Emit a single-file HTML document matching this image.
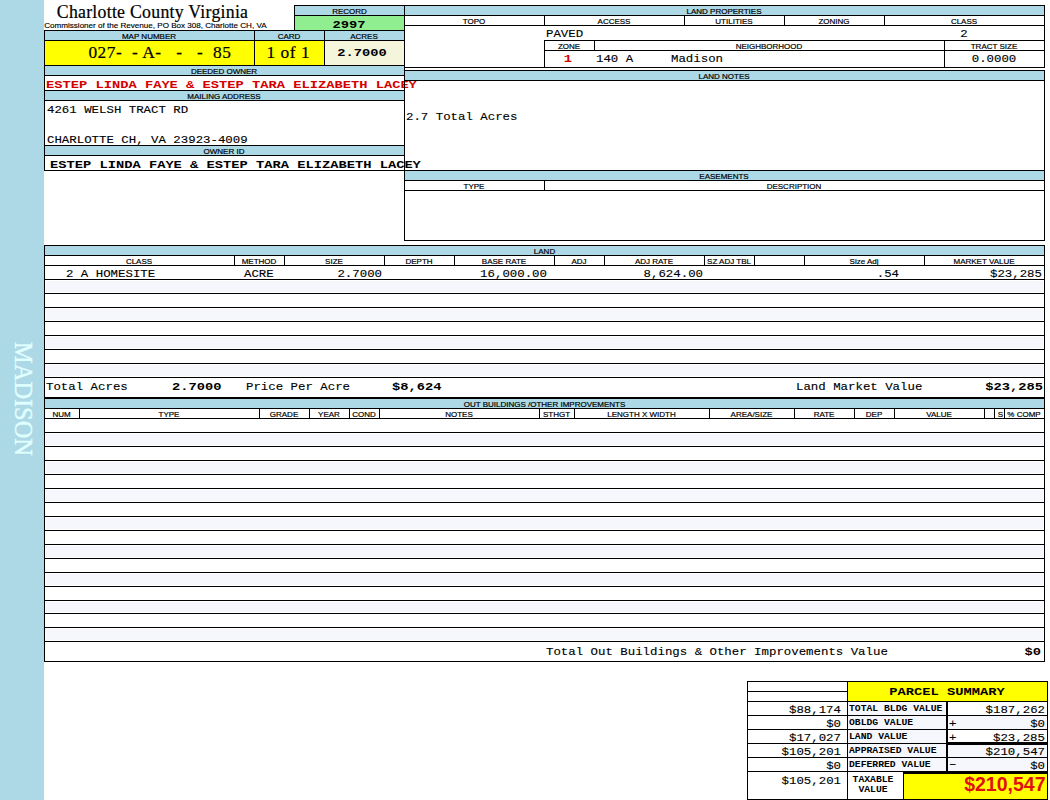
<!DOCTYPE html>
<html lang="en"><head><meta charset="utf-8"><title>Charlotte County Virginia - Property Card</title>
<style>
html,body{margin:0;padding:0;background:#fff}
body{width:1050px;height:800px;position:relative;overflow:hidden}
.f,.l,.t{position:absolute}
.l{background:#000;z-index:6}
.t{white-space:pre;color:#000;overflow:visible;z-index:5}
.hd{font-family:"Liberation Sans",Arial,sans-serif;font-size:8px;-webkit-text-stroke:0.2px #000}
.sub{font-family:"Liberation Sans",Arial,sans-serif;font-size:8.1px;-webkit-text-stroke:0.15px #000}
.ser{font-family:"Liberation Serif","Times New Roman",serif;font-size:17.33px;letter-spacing:0.53px;-webkit-text-stroke:0.2px #000}
.ttl{font-family:"Liberation Serif","Times New Roman",serif;font-size:17.8px;letter-spacing:0.26px;-webkit-text-stroke:0.2px #000}
.m{font-family:"Liberation Mono","Courier New",monospace;font-size:11px;-webkit-text-stroke:0.12px #000}
.mb{font-family:"Liberation Mono","Courier New",monospace;font-size:11px;font-weight:bold}
.ms{font-family:"Liberation Mono","Courier New",monospace;font-size:8.5px;font-weight:bold}
.big{font-family:"Liberation Sans",Arial,sans-serif;font-size:19.5px;font-weight:bold}
.side{font-family:"Liberation Serif","Times New Roman",serif;font-size:24.4px;color:#e0ffff;-webkit-text-stroke:0.35px #e0ffff}
</style></head>
<body>
<div class="f" style="left:0px;top:0px;width:44px;height:800px;background:#add8e6"></div>
<div class="t side" style="left:-76.9px;top:384.2px;width:200px;height:30px;line-height:30px;text-align:center;transform:rotate(90deg)">MADISON</div>
<div class="t ttl" style="left:-97.50px;top:0.79px;width:500px;height:23px;line-height:23px;text-align:center;">Charlotte County Virginia</div>
<div class="t sub" style="left:44.20px;top:20.19px;width:500px;height:11px;line-height:11px;text-align:left;letter-spacing:-0.01px;">Commissioner of the Revenue, PO Box 308, Charlotte CH, VA</div>
<div class="f" style="left:295px;top:6px;width:109px;height:9px;background:#add8e6"></div>
<div class="f" style="left:295px;top:16px;width:109px;height:14px;background:#90ee90"></div>
<div class="l" style="left:294px;top:5px;width:111px;height:1px"></div>
<div class="l" style="left:294px;top:15px;width:111px;height:1px"></div>
<div class="l" style="left:294px;top:5px;width:1px;height:26px"></div>
<div class="t hd" style="left:99.50px;top:6.63px;width:500px;height:10px;line-height:10px;text-align:center;">RECORD</div>
<div class="t mb" style="left:98.50px;top:17.57px;width:500px;height:14px;line-height:14px;text-align:center;transform:scaleX(1.2485);transform-origin:50% 50%;">2997</div>
<div class="f" style="left:45px;top:31px;width:359px;height:9px;background:#add8e6"></div>
<div class="f" style="left:45px;top:41px;width:209px;height:24px;background:#ffff00"></div>
<div class="f" style="left:255px;top:41px;width:69px;height:24px;background:#ffff00"></div>
<div class="f" style="left:325px;top:41px;width:79px;height:24px;background:#f5f5dc"></div>
<div class="f" style="left:45px;top:66px;width:359px;height:9px;background:#add8e6"></div>
<div class="f" style="left:45px;top:91px;width:359px;height:9px;background:#add8e6"></div>
<div class="f" style="left:45px;top:146px;width:359px;height:9px;background:#add8e6"></div>
<div class="l" style="left:44px;top:30px;width:361px;height:1px"></div>
<div class="l" style="left:44px;top:40px;width:361px;height:1px"></div>
<div class="l" style="left:44px;top:65px;width:361px;height:1px"></div>
<div class="l" style="left:44px;top:75px;width:361px;height:1px"></div>
<div class="l" style="left:44px;top:90px;width:361px;height:1px"></div>
<div class="l" style="left:44px;top:100px;width:361px;height:1px"></div>
<div class="l" style="left:44px;top:145px;width:361px;height:1px"></div>
<div class="l" style="left:44px;top:155px;width:361px;height:1px"></div>
<div class="l" style="left:44px;top:170px;width:361px;height:1px"></div>
<div class="l" style="left:44px;top:30px;width:1px;height:141px"></div>
<div class="l" style="left:254px;top:30px;width:1px;height:36px"></div>
<div class="l" style="left:324px;top:30px;width:1px;height:36px"></div>
<div class="t hd" style="left:-101.00px;top:31.63px;width:500px;height:10px;line-height:10px;text-align:center;">MAP NUMBER</div>
<div class="t hd" style="left:39.00px;top:31.63px;width:500px;height:10px;line-height:10px;text-align:center;">CARD</div>
<div class="t hd" style="left:114.00px;top:31.63px;width:500px;height:10px;line-height:10px;text-align:center;">ACRES</div>
<div class="t ser" style="left:88.40px;top:40.75px;width:500px;height:23px;line-height:23px;text-align:left;">027-  - A-   -   -  85</div>
<div class="t ser" style="left:38.30px;top:40.75px;width:500px;height:23px;line-height:23px;text-align:center;">1 of 1</div>
<div class="t mb" style="left:112.00px;top:45.67px;width:500px;height:14px;line-height:14px;text-align:center;transform:scaleX(1.2485);transform-origin:50% 50%;">2.7000</div>
<div class="t hd" style="left:-26.00px;top:66.63px;width:500px;height:10px;line-height:10px;text-align:center;">DEEDED OWNER</div>
<div class="t mb" style="left:45.50px;top:77.57px;width:500px;height:14px;line-height:14px;text-align:left;transform:scaleX(1.2485);transform-origin:0 50%;color:#d40000;">ESTEP LINDA FAYE &amp; ESTEP TARA ELIZABETH LACEY</div>
<div class="t hd" style="left:-26.00px;top:91.63px;width:500px;height:10px;line-height:10px;text-align:center;">MAILING ADDRESS</div>
<div class="t m" style="left:46.70px;top:102.57px;width:500px;height:14px;line-height:14px;text-align:left;transform:scaleX(1.1258);transform-origin:0 50%;">4261 WELSH TRACT RD</div>
<div class="t m" style="left:46.70px;top:132.77px;width:500px;height:14px;line-height:14px;text-align:left;transform:scaleX(1.1258);transform-origin:0 50%;">CHARLOTTE CH, VA 23923-4009</div>
<div class="t hd" style="left:-26.00px;top:146.63px;width:500px;height:10px;line-height:10px;text-align:center;">OWNER ID</div>
<div class="t mb" style="left:49.70px;top:157.87px;width:500px;height:14px;line-height:14px;text-align:left;transform:scaleX(1.2485);transform-origin:0 50%;">ESTEP LINDA FAYE &amp; ESTEP TARA ELIZABETH LACEY</div>
<div class="f" style="left:405px;top:6px;width:639px;height:9px;background:#add8e6"></div>
<div class="l" style="left:404px;top:5px;width:641px;height:1px"></div>
<div class="l" style="left:404px;top:15px;width:641px;height:1px"></div>
<div class="l" style="left:404px;top:25px;width:641px;height:1px"></div>
<div class="l" style="left:404px;top:67px;width:641px;height:1px"></div>
<div class="l" style="left:544px;top:40px;width:501px;height:1px"></div>
<div class="l" style="left:544px;top:50px;width:501px;height:1px"></div>
<div class="l" style="left:404px;top:5px;width:1px;height:236px"></div>
<div class="l" style="left:1044px;top:5px;width:1px;height:63px"></div>
<div class="l" style="left:544px;top:15px;width:1px;height:11px"></div>
<div class="l" style="left:684px;top:15px;width:1px;height:11px"></div>
<div class="l" style="left:784px;top:15px;width:1px;height:11px"></div>
<div class="l" style="left:884px;top:15px;width:1px;height:11px"></div>
<div class="l" style="left:544px;top:40px;width:1px;height:28px"></div>
<div class="l" style="left:594px;top:40px;width:1px;height:11px"></div>
<div class="l" style="left:944px;top:40px;width:1px;height:28px"></div>
<div class="t hd" style="left:474.00px;top:6.63px;width:500px;height:10px;line-height:10px;text-align:center;">LAND PROPERTIES</div>
<div class="t hd" style="left:224.00px;top:16.63px;width:500px;height:10px;line-height:10px;text-align:center;">TOPO</div>
<div class="t hd" style="left:364.00px;top:16.63px;width:500px;height:10px;line-height:10px;text-align:center;">ACCESS</div>
<div class="t hd" style="left:484.00px;top:16.63px;width:500px;height:10px;line-height:10px;text-align:center;">UTILITIES</div>
<div class="t hd" style="left:584.00px;top:16.63px;width:500px;height:10px;line-height:10px;text-align:center;">ZONING</div>
<div class="t hd" style="left:714.00px;top:16.63px;width:500px;height:10px;line-height:10px;text-align:center;">CLASS</div>
<div class="t m" style="left:546.20px;top:26.67px;width:500px;height:14px;line-height:14px;text-align:left;transform:scaleX(1.1258);transform-origin:0 50%;">PAVED</div>
<div class="t m" style="left:713.70px;top:26.67px;width:500px;height:14px;line-height:14px;text-align:center;transform:scaleX(1.1258);transform-origin:50% 50%;">2</div>
<div class="t hd" style="left:319.00px;top:41.63px;width:500px;height:10px;line-height:10px;text-align:center;">ZONE</div>
<div class="t hd" style="left:519.00px;top:41.63px;width:500px;height:10px;line-height:10px;text-align:center;">NEIGHBORHOOD</div>
<div class="t hd" style="left:744.00px;top:41.63px;width:500px;height:10px;line-height:10px;text-align:center;">TRACT SIZE</div>
<div class="t mb" style="left:318.00px;top:51.97px;width:500px;height:14px;line-height:14px;text-align:center;transform:scaleX(1.2485);transform-origin:50% 50%;color:#d40000;">1</div>
<div class="t m" style="left:596.20px;top:51.97px;width:500px;height:14px;line-height:14px;text-align:left;transform:scaleX(1.1258);transform-origin:0 50%;">140 A</div>
<div class="t m" style="left:671.00px;top:51.97px;width:500px;height:14px;line-height:14px;text-align:left;transform:scaleX(1.1258);transform-origin:0 50%;">Madison</div>
<div class="t m" style="left:744.00px;top:51.97px;width:500px;height:14px;line-height:14px;text-align:center;transform:scaleX(1.1258);transform-origin:50% 50%;">0.0000</div>
<div class="f" style="left:405px;top:71px;width:639px;height:9px;background:#add8e6"></div>
<div class="l" style="left:404px;top:70px;width:641px;height:1px"></div>
<div class="l" style="left:404px;top:80px;width:641px;height:1px"></div>
<div class="l" style="left:1044px;top:70px;width:1px;height:171px"></div>
<div class="t hd" style="left:474.00px;top:71.63px;width:500px;height:10px;line-height:10px;text-align:center;">LAND NOTES</div>
<div class="t m" style="left:406.10px;top:109.67px;width:500px;height:14px;line-height:14px;text-align:left;transform:scaleX(1.1258);transform-origin:0 50%;">2.7 Total Acres</div>
<div class="f" style="left:405px;top:171px;width:639px;height:9px;background:#add8e6"></div>
<div class="l" style="left:404px;top:170px;width:641px;height:1px"></div>
<div class="l" style="left:404px;top:180px;width:641px;height:1px"></div>
<div class="l" style="left:404px;top:190px;width:641px;height:1px"></div>
<div class="l" style="left:404px;top:240px;width:641px;height:1px"></div>
<div class="l" style="left:544px;top:180px;width:1px;height:11px"></div>
<div class="t hd" style="left:474.00px;top:171.63px;width:500px;height:10px;line-height:10px;text-align:center;">EASEMENTS</div>
<div class="t hd" style="left:224.00px;top:181.63px;width:500px;height:10px;line-height:10px;text-align:center;">TYPE</div>
<div class="t hd" style="left:544.00px;top:181.63px;width:500px;height:10px;line-height:10px;text-align:center;">DESCRIPTION</div>
<div class="f" style="left:45px;top:246px;width:999px;height:9px;background:#add8e6"></div>
<div class="f" style="left:46px;top:281px;width:997px;height:11px;background:#f6f7fc"></div>
<div class="f" style="left:46px;top:309px;width:997px;height:11px;background:#f6f7fc"></div>
<div class="f" style="left:46px;top:337px;width:997px;height:11px;background:#f6f7fc"></div>
<div class="f" style="left:46px;top:365px;width:997px;height:11px;background:#f6f7fc"></div>
<div class="l" style="left:44px;top:245px;width:1001px;height:1px"></div>
<div class="l" style="left:44px;top:255px;width:1001px;height:1px"></div>
<div class="l" style="left:44px;top:265px;width:1001px;height:1px"></div>
<div class="l" style="left:44px;top:279px;width:1001px;height:1px"></div>
<div class="l" style="left:44px;top:293px;width:1001px;height:1px"></div>
<div class="l" style="left:44px;top:307px;width:1001px;height:1px"></div>
<div class="l" style="left:44px;top:321px;width:1001px;height:1px"></div>
<div class="l" style="left:44px;top:335px;width:1001px;height:1px"></div>
<div class="l" style="left:44px;top:349px;width:1001px;height:1px"></div>
<div class="l" style="left:44px;top:363px;width:1001px;height:1px"></div>
<div class="l" style="left:44px;top:377px;width:1001px;height:1px"></div>
<div class="l" style="left:44px;top:397px;width:1001px;height:1px"></div>
<div class="l" style="left:44px;top:245px;width:1px;height:153px"></div>
<div class="l" style="left:1044px;top:245px;width:1px;height:153px"></div>
<div class="l" style="left:234px;top:255px;width:1px;height:11px"></div>
<div class="l" style="left:284px;top:255px;width:1px;height:11px"></div>
<div class="l" style="left:384px;top:255px;width:1px;height:11px"></div>
<div class="l" style="left:454px;top:255px;width:1px;height:11px"></div>
<div class="l" style="left:554px;top:255px;width:1px;height:11px"></div>
<div class="l" style="left:604px;top:255px;width:1px;height:11px"></div>
<div class="l" style="left:704px;top:255px;width:1px;height:11px"></div>
<div class="l" style="left:754px;top:255px;width:1px;height:11px"></div>
<div class="l" style="left:804px;top:255px;width:1px;height:11px"></div>
<div class="l" style="left:924px;top:255px;width:1px;height:11px"></div>
<div class="t hd" style="left:294.50px;top:246.63px;width:500px;height:10px;line-height:10px;text-align:center;">LAND</div>
<div class="t hd" style="left:-111.00px;top:256.63px;width:500px;height:10px;line-height:10px;text-align:center;">CLASS</div>
<div class="t hd" style="left:9.00px;top:256.63px;width:500px;height:10px;line-height:10px;text-align:center;">METHOD</div>
<div class="t hd" style="left:84.00px;top:256.63px;width:500px;height:10px;line-height:10px;text-align:center;">SIZE</div>
<div class="t hd" style="left:169.00px;top:256.63px;width:500px;height:10px;line-height:10px;text-align:center;">DEPTH</div>
<div class="t hd" style="left:254.00px;top:256.63px;width:500px;height:10px;line-height:10px;text-align:center;">BASE RATE</div>
<div class="t hd" style="left:329.00px;top:256.63px;width:500px;height:10px;line-height:10px;text-align:center;">ADJ</div>
<div class="t hd" style="left:404.00px;top:256.63px;width:500px;height:10px;line-height:10px;text-align:center;">ADJ RATE</div>
<div class="t hd" style="left:479.00px;top:256.63px;width:500px;height:10px;line-height:10px;text-align:center;">SZ ADJ TBL</div>
<div class="t hd" style="left:614.00px;top:256.63px;width:500px;height:10px;line-height:10px;text-align:center;">Size Adj</div>
<div class="t hd" style="left:734.00px;top:256.63px;width:500px;height:10px;line-height:10px;text-align:center;">MARKET VALUE</div>
<div class="t m" style="left:65.60px;top:267.07px;width:500px;height:14px;line-height:14px;text-align:left;transform:scaleX(1.1258);transform-origin:0 50%;">2 A HOMESITE</div>
<div class="t m" style="left:244.00px;top:267.07px;width:500px;height:14px;line-height:14px;text-align:left;transform:scaleX(1.1258);transform-origin:0 50%;">ACRE</div>
<div class="t m" style="left:-118.50px;top:267.07px;width:500px;height:14px;line-height:14px;text-align:right;transform:scaleX(1.1258);transform-origin:100% 50%;">2.7000</div>
<div class="t m" style="left:46.60px;top:267.07px;width:500px;height:14px;line-height:14px;text-align:right;transform:scaleX(1.1258);transform-origin:100% 50%;">16,000.00</div>
<div class="t m" style="left:202.80px;top:267.07px;width:500px;height:14px;line-height:14px;text-align:right;transform:scaleX(1.1258);transform-origin:100% 50%;">8,624.00</div>
<div class="t m" style="left:399.00px;top:267.07px;width:500px;height:14px;line-height:14px;text-align:right;transform:scaleX(1.1258);transform-origin:100% 50%;">.54</div>
<div class="t m" style="left:542.30px;top:267.07px;width:500px;height:14px;line-height:14px;text-align:right;transform:scaleX(1.1258);transform-origin:100% 50%;">$23,285</div>
<div class="t m" style="left:45.60px;top:380.07px;width:500px;height:14px;line-height:14px;text-align:left;transform:scaleX(1.1258);transform-origin:0 50%;">Total Acres</div>
<div class="t mb" style="left:172.00px;top:380.07px;width:500px;height:14px;line-height:14px;text-align:left;transform:scaleX(1.2485);transform-origin:0 50%;">2.7000</div>
<div class="t m" style="left:246.00px;top:380.07px;width:500px;height:14px;line-height:14px;text-align:left;transform:scaleX(1.1258);transform-origin:0 50%;">Price Per Acre</div>
<div class="t mb" style="left:392.00px;top:380.07px;width:500px;height:14px;line-height:14px;text-align:left;transform:scaleX(1.2485);transform-origin:0 50%;">$8,624</div>
<div class="t m" style="left:796.00px;top:380.07px;width:500px;height:14px;line-height:14px;text-align:left;transform:scaleX(1.1258);transform-origin:0 50%;">Land Market Value</div>
<div class="t mb" style="left:542.50px;top:380.07px;width:500px;height:14px;line-height:14px;text-align:right;transform:scaleX(1.2485);transform-origin:100% 50%;">$23,285</div>
<div class="f" style="left:45px;top:399px;width:999px;height:9px;background:#add8e6"></div>
<div class="f" style="left:46px;top:434px;width:997px;height:11px;background:#f6f7fc"></div>
<div class="f" style="left:46px;top:462px;width:997px;height:11px;background:#f6f7fc"></div>
<div class="f" style="left:46px;top:490px;width:997px;height:11px;background:#f6f7fc"></div>
<div class="f" style="left:46px;top:518px;width:997px;height:11px;background:#f6f7fc"></div>
<div class="f" style="left:46px;top:546px;width:997px;height:11px;background:#f6f7fc"></div>
<div class="f" style="left:46px;top:574px;width:997px;height:11px;background:#f6f7fc"></div>
<div class="f" style="left:46px;top:602px;width:997px;height:10px;background:#f6f7fc"></div>
<div class="f" style="left:46px;top:629px;width:997px;height:11px;background:#f6f7fc"></div>
<div class="l" style="left:44px;top:398px;width:1001px;height:1px"></div>
<div class="l" style="left:44px;top:408px;width:1001px;height:1px"></div>
<div class="l" style="left:44px;top:418px;width:1001px;height:1px"></div>
<div class="l" style="left:44px;top:432px;width:1001px;height:1px"></div>
<div class="l" style="left:44px;top:446px;width:1001px;height:1px"></div>
<div class="l" style="left:44px;top:460px;width:1001px;height:1px"></div>
<div class="l" style="left:44px;top:474px;width:1001px;height:1px"></div>
<div class="l" style="left:44px;top:488px;width:1001px;height:1px"></div>
<div class="l" style="left:44px;top:502px;width:1001px;height:1px"></div>
<div class="l" style="left:44px;top:516px;width:1001px;height:1px"></div>
<div class="l" style="left:44px;top:530px;width:1001px;height:1px"></div>
<div class="l" style="left:44px;top:544px;width:1001px;height:1px"></div>
<div class="l" style="left:44px;top:558px;width:1001px;height:1px"></div>
<div class="l" style="left:44px;top:572px;width:1001px;height:1px"></div>
<div class="l" style="left:44px;top:586px;width:1001px;height:1px"></div>
<div class="l" style="left:44px;top:600px;width:1001px;height:1px"></div>
<div class="l" style="left:44px;top:613px;width:1001px;height:1px"></div>
<div class="l" style="left:44px;top:627px;width:1001px;height:1px"></div>
<div class="l" style="left:44px;top:641px;width:1001px;height:1px"></div>
<div class="l" style="left:44px;top:661px;width:1001px;height:1px"></div>
<div class="l" style="left:44px;top:398px;width:1px;height:264px"></div>
<div class="l" style="left:1044px;top:398px;width:1px;height:264px"></div>
<div class="l" style="left:79px;top:408px;width:1px;height:11px"></div>
<div class="l" style="left:259px;top:408px;width:1px;height:11px"></div>
<div class="l" style="left:309px;top:408px;width:1px;height:11px"></div>
<div class="l" style="left:349px;top:408px;width:1px;height:11px"></div>
<div class="l" style="left:379px;top:408px;width:1px;height:11px"></div>
<div class="l" style="left:539px;top:408px;width:1px;height:11px"></div>
<div class="l" style="left:574px;top:408px;width:1px;height:11px"></div>
<div class="l" style="left:709px;top:408px;width:1px;height:11px"></div>
<div class="l" style="left:794px;top:408px;width:1px;height:11px"></div>
<div class="l" style="left:854px;top:408px;width:1px;height:11px"></div>
<div class="l" style="left:894px;top:408px;width:1px;height:11px"></div>
<div class="l" style="left:984px;top:408px;width:1px;height:11px"></div>
<div class="l" style="left:994px;top:408px;width:1px;height:11px"></div>
<div class="l" style="left:1004px;top:408px;width:1px;height:11px"></div>
<div class="t hd" style="left:294.50px;top:399.63px;width:500px;height:10px;line-height:10px;text-align:center;">OUT BUILDINGS /OTHER IMPROVEMENTS</div>
<div class="t hd" style="left:-188.50px;top:409.63px;width:500px;height:10px;line-height:10px;text-align:center;">NUM</div>
<div class="t hd" style="left:-81.00px;top:409.63px;width:500px;height:10px;line-height:10px;text-align:center;">TYPE</div>
<div class="t hd" style="left:34.00px;top:409.63px;width:500px;height:10px;line-height:10px;text-align:center;">GRADE</div>
<div class="t hd" style="left:79.00px;top:409.63px;width:500px;height:10px;line-height:10px;text-align:center;">YEAR</div>
<div class="t hd" style="left:114.00px;top:409.63px;width:500px;height:10px;line-height:10px;text-align:center;">COND</div>
<div class="t hd" style="left:209.00px;top:409.63px;width:500px;height:10px;line-height:10px;text-align:center;">NOTES</div>
<div class="t hd" style="left:306.50px;top:409.63px;width:500px;height:10px;line-height:10px;text-align:center;">STHGT</div>
<div class="t hd" style="left:391.50px;top:409.63px;width:500px;height:10px;line-height:10px;text-align:center;">LENGTH X WIDTH</div>
<div class="t hd" style="left:501.50px;top:409.63px;width:500px;height:10px;line-height:10px;text-align:center;">AREA/SIZE</div>
<div class="t hd" style="left:574.00px;top:409.63px;width:500px;height:10px;line-height:10px;text-align:center;">RATE</div>
<div class="t hd" style="left:624.00px;top:409.63px;width:500px;height:10px;line-height:10px;text-align:center;">DEP</div>
<div class="t hd" style="left:689.00px;top:409.63px;width:500px;height:10px;line-height:10px;text-align:center;">VALUE</div>
<div class="t hd" style="left:750.30px;top:409.63px;width:500px;height:10px;line-height:10px;text-align:center;">S</div>
<div class="t hd" style="left:774.00px;top:409.63px;width:500px;height:10px;line-height:10px;text-align:center;">% COMP</div>
<div class="t m" style="left:546.00px;top:644.67px;width:500px;height:14px;line-height:14px;text-align:left;transform:scaleX(1.1258);transform-origin:0 50%;">Total Out Buildings &amp; Other Improvements Value</div>
<div class="t mb" style="left:541.30px;top:644.67px;width:500px;height:14px;line-height:14px;text-align:right;transform:scaleX(1.2485);transform-origin:100% 50%;">$0</div>
<div class="f" style="left:848px;top:682px;width:199px;height:19px;background:#ffff00"></div>
<div class="f" style="left:904px;top:774px;width:143px;height:25px;background:#ffff00"></div>
<div class="f" style="left:848px;top:702px;width:98px;height:69px;background:#f6f7fc"></div>
<div class="f" style="left:948px;top:716px;width:99px;height:13px;background:#f6f7fc"></div>
<div class="f" style="left:948px;top:745px;width:99px;height:26px;background:#f6f7fc"></div>
<div class="l" style="left:747px;top:681px;width:301px;height:1px"></div>
<div class="l" style="left:747px;top:691px;width:101px;height:1px"></div>
<div class="l" style="left:747px;top:701px;width:301px;height:1px"></div>
<div class="l" style="left:747px;top:715px;width:301px;height:1px"></div>
<div class="l" style="left:747px;top:729px;width:301px;height:1px"></div>
<div class="l" style="left:747px;top:743px;width:301px;height:1px"></div>
<div class="l" style="left:747px;top:757px;width:301px;height:1px"></div>
<div class="l" style="left:747px;top:771px;width:301px;height:1px"></div>
<div class="l" style="left:747px;top:799px;width:301px;height:1px"></div>
<div class="l" style="left:947px;top:742px;width:101px;height:3px"></div>
<div class="l" style="left:903px;top:771px;width:145px;height:3px"></div>
<div class="l" style="left:747px;top:681px;width:1px;height:119px"></div>
<div class="l" style="left:847px;top:681px;width:1px;height:119px"></div>
<div class="l" style="left:1047px;top:681px;width:1px;height:119px"></div>
<div class="l" style="left:946px;top:701px;width:2px;height:71px"></div>
<div class="l" style="left:903px;top:771px;width:1px;height:29px"></div>
<div class="t mb" style="left:696.50px;top:685.07px;width:500px;height:14px;line-height:14px;text-align:center;transform:scaleX(1.2485);transform-origin:50% 50%;">PARCEL SUMMARY</div>
<div class="t m" style="left:341.30px;top:703.07px;width:500px;height:14px;line-height:14px;text-align:right;transform:scaleX(1.1258);transform-origin:100% 50%;">$88,174</div>
<div class="t ms" style="left:849.00px;top:703.63px;width:500px;height:11px;line-height:11px;text-align:left;transform:scaleX(1.1431);transform-origin:0 50%;">TOTAL BLDG VALUE</div>
<div class="t m" style="left:545.00px;top:703.07px;width:500px;height:14px;line-height:14px;text-align:right;transform:scaleX(1.1258);transform-origin:100% 50%;">$187,262</div>
<div class="t m" style="left:341.30px;top:717.07px;width:500px;height:14px;line-height:14px;text-align:right;transform:scaleX(1.1258);transform-origin:100% 50%;">$0</div>
<div class="t ms" style="left:849.00px;top:717.63px;width:500px;height:11px;line-height:11px;text-align:left;transform:scaleX(1.1431);transform-origin:0 50%;">OBLDG VALUE</div>
<div class="t m" style="left:545.00px;top:717.07px;width:500px;height:14px;line-height:14px;text-align:right;transform:scaleX(1.1258);transform-origin:100% 50%;">$0</div>
<div class="t m" style="left:949.00px;top:717.07px;width:500px;height:14px;line-height:14px;text-align:left;transform:scaleX(1.1258);transform-origin:0 50%;">+</div>
<div class="t m" style="left:341.30px;top:731.07px;width:500px;height:14px;line-height:14px;text-align:right;transform:scaleX(1.1258);transform-origin:100% 50%;">$17,027</div>
<div class="t ms" style="left:849.00px;top:731.63px;width:500px;height:11px;line-height:11px;text-align:left;transform:scaleX(1.1431);transform-origin:0 50%;">LAND VALUE</div>
<div class="t m" style="left:545.00px;top:731.07px;width:500px;height:14px;line-height:14px;text-align:right;transform:scaleX(1.1258);transform-origin:100% 50%;">$23,285</div>
<div class="t m" style="left:949.00px;top:731.07px;width:500px;height:14px;line-height:14px;text-align:left;transform:scaleX(1.1258);transform-origin:0 50%;">+</div>
<div class="t m" style="left:341.30px;top:745.07px;width:500px;height:14px;line-height:14px;text-align:right;transform:scaleX(1.1258);transform-origin:100% 50%;">$105,201</div>
<div class="t ms" style="left:849.00px;top:745.63px;width:500px;height:11px;line-height:11px;text-align:left;transform:scaleX(1.1431);transform-origin:0 50%;">APPRAISED VALUE</div>
<div class="t m" style="left:545.00px;top:745.07px;width:500px;height:14px;line-height:14px;text-align:right;transform:scaleX(1.1258);transform-origin:100% 50%;">$210,547</div>
<div class="t m" style="left:341.30px;top:759.07px;width:500px;height:14px;line-height:14px;text-align:right;transform:scaleX(1.1258);transform-origin:100% 50%;">$0</div>
<div class="t ms" style="left:849.00px;top:759.63px;width:500px;height:11px;line-height:11px;text-align:left;transform:scaleX(1.1431);transform-origin:0 50%;">DEFERRED VALUE</div>
<div class="t m" style="left:545.00px;top:759.07px;width:500px;height:14px;line-height:14px;text-align:right;transform:scaleX(1.1258);transform-origin:100% 50%;">$0</div>
<div class="t m" style="left:949.00px;top:757.07px;width:500px;height:14px;line-height:14px;text-align:left;transform:scaleX(1.1258);transform-origin:0 50%;">–</div>
<div class="t m" style="left:341.30px;top:774.07px;width:500px;height:14px;line-height:14px;text-align:right;transform:scaleX(1.1258);transform-origin:100% 50%;">$105,201</div>
<div class="t ms" style="left:623.30px;top:774.63px;width:500px;height:11px;line-height:11px;text-align:center;transform:scaleX(1.1431);transform-origin:50% 50%;">TAXABLE</div>
<div class="t ms" style="left:623.30px;top:784.63px;width:500px;height:11px;line-height:11px;text-align:center;transform:scaleX(1.1431);transform-origin:50% 50%;">VALUE</div>
<div class="t big" style="left:545.50px;top:771.74px;width:500px;height:25px;line-height:25px;text-align:right;color:#e01010;">$210,547</div>
</body></html>
